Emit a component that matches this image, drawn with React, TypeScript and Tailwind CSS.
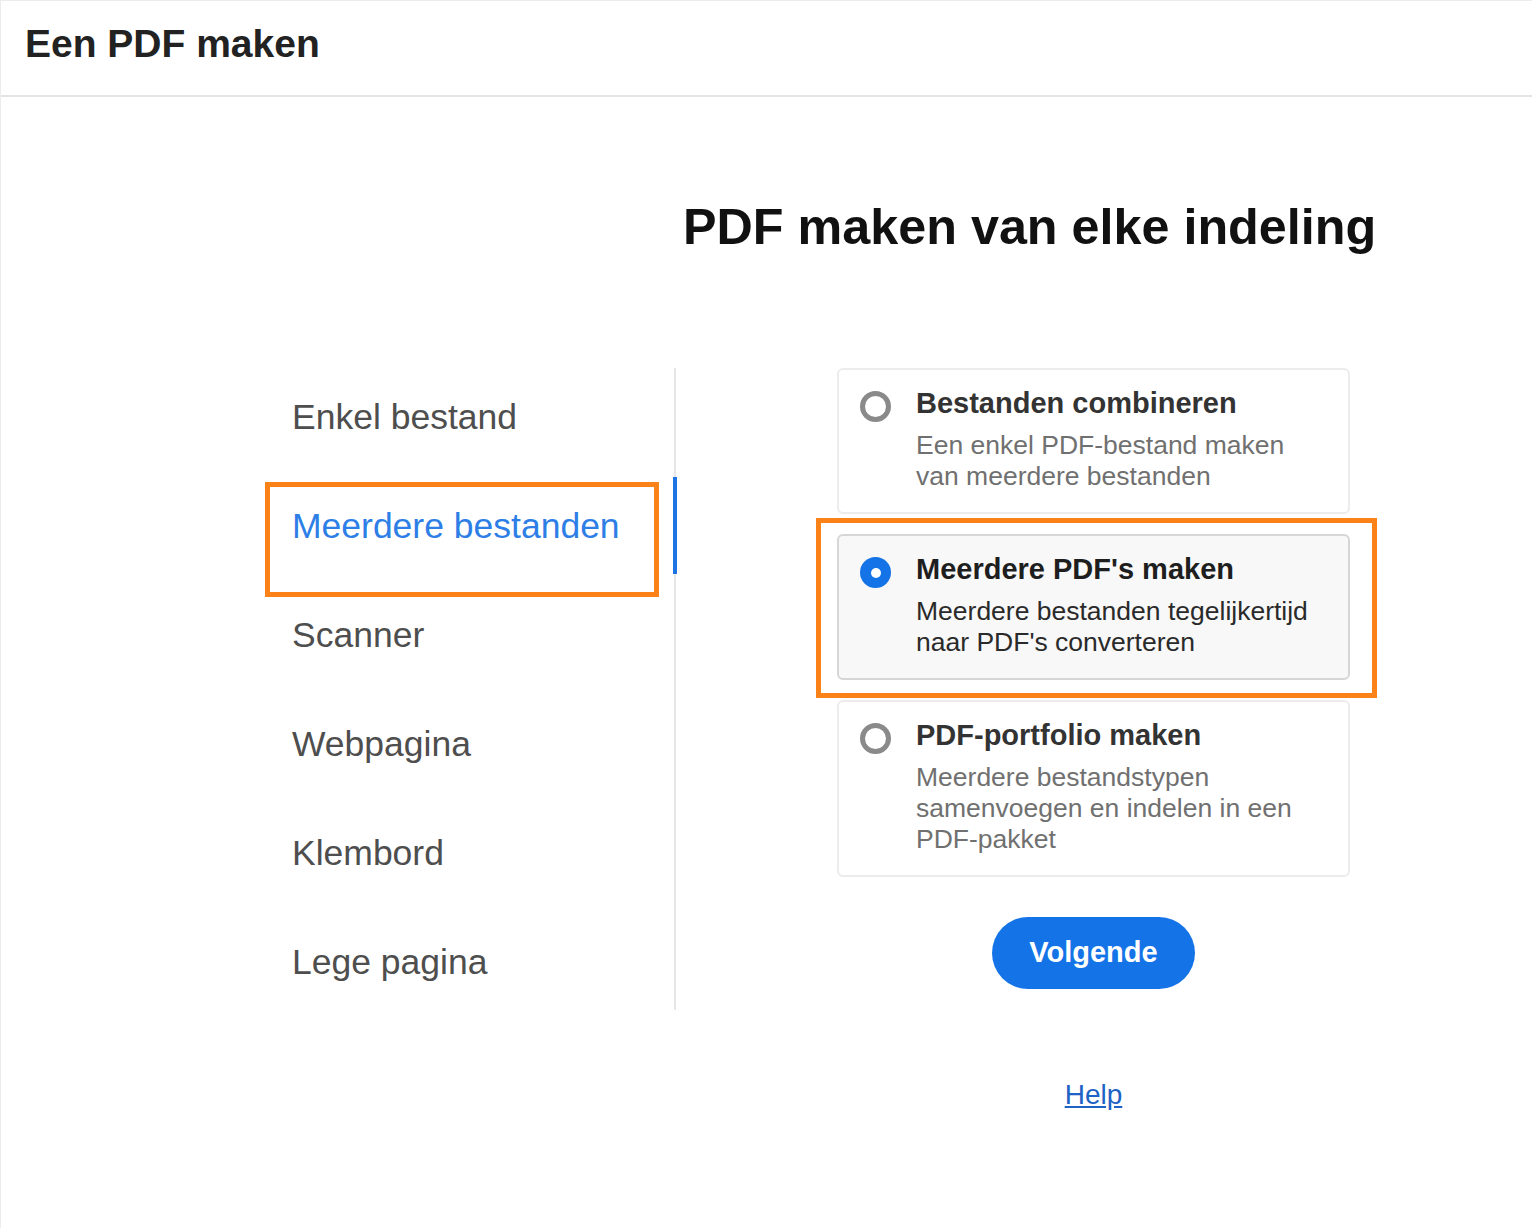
import { ReactNode } from "react";

const navItems = ["Enkel bestand", "Meerdere bestanden", "Scanner", "Webpagina", "Klembord", "Lege pagina"];

function Radio({ checked }: { checked?: boolean }) {
  if (checked) {
    return (
      <span className="mt-[6px] flex h-[31px] w-[31px] shrink-0 items-center justify-center rounded-full bg-[#1473e6]">
        <span className="h-[10px] w-[10px] rounded-full bg-white" />
      </span>
    );
  }
  return <span className="mt-[6px] h-[31px] w-[31px] shrink-0 rounded-full border-[5px] border-[#8a8a8a] bg-white" />;
}

function OptionCard({ title, checked, children }: { title: string; checked?: boolean; children: ReactNode }) {
  return (
    <div
      className={
        checked
          ? "flex gap-[25px] rounded-[6px] border-2 border-[#d6d6d6] bg-[#f8f8f8] pb-[20px] pl-[21px] pr-[20px] pt-[15px]"
          : "flex gap-[25px] rounded-[6px] border-2 border-[#ececec] bg-white pb-[20px] pl-[21px] pr-[20px] pt-[15px]"
      }
    >
      <Radio checked={checked} />
      <div>
        <div className={checked ? "text-[29px] font-bold leading-[36px] text-[#1e1e1e]" : "text-[29px] font-bold leading-[36px] text-[#333]"}>
          {title}
        </div>
        <p className={checked ? "mt-[9px] text-[26.5px] leading-[31px] text-[#2a2a2a]" : "mt-[9px] text-[26.5px] leading-[31px] text-[#707070]"}>
          {children}
        </p>
      </div>
    </div>
  );
}

export default function App() {
  return (
    <div className="min-h-screen border-l border-t border-[#ececec] bg-white font-['Liberation_Sans',Arial,sans-serif]">
      <header className="h-[96px] border-b-2 border-[#e4e4e4] pl-[24px] pt-[19px]">
        <h1 className="text-[39px] font-bold leading-[47px] text-[#222]">Een PDF maken</h1>
      </header>

      <h2 className="ml-[682px] mt-[100px] text-[50.3px] font-bold leading-[60px] text-[#111]">PDF maken van elke indeling</h2>

      <div className="mt-[111px] flex items-start">
        <nav className="ml-[264px] flex w-[411px] flex-col gap-3 border-r-2 border-[#e6e6e6]">
          {navItems.map((item, i) => (
            <div key={item} className="relative flex h-[97px] items-center pl-[27px]">
              <span className={i === 1 ? "text-[35.5px] leading-[42px] text-[#2d7ee6]" : "text-[35.5px] leading-[42px] text-[#4e4e4e]"}>
                {item}
              </span>
              {i === 1 && (
                <>
                  <span className="absolute right-[-3px] top-0 h-full w-[4px] bg-[#1f74e4]" />
                  <span className="absolute bottom-[-23px] left-0 right-[15px] top-[5px] border-[5px] border-[#fb8219]" />
                </>
              )}
            </div>
          ))}
        </nav>

        <div className="ml-[161px] flex w-[513px] flex-col">
          <div className="flex flex-col gap-5">
            <OptionCard title="Bestanden combineren">
              Een enkel PDF-bestand maken
              <br />
              van meerdere bestanden
            </OptionCard>
            <div className="relative">
              <OptionCard title="Meerdere PDF's maken" checked>
                Meerdere bestanden tegelijkertijd
                <br />
                naar PDF's converteren
              </OptionCard>
              <span className="absolute bottom-[-18px] left-[-21px] right-[-27px] top-[-16px] border-[5px] border-[#fb8219]" />
            </div>
            <OptionCard title="PDF-portfolio maken">
              Meerdere bestandstypen
              <br />
              samenvoegen en indelen in een
              <br />
              PDF-pakket
            </OptionCard>
          </div>

          <button className="mt-[40px] h-[72px] w-[203px] self-center rounded-full bg-[#1473e6] text-[29px] font-bold text-white">
            Volgende
          </button>

          <a href="#" className="mt-[90px] self-center text-[28px] leading-[32px] text-[#1d62c4] underline">
            Help
          </a>
        </div>
      </div>
    </div>
  );
}
